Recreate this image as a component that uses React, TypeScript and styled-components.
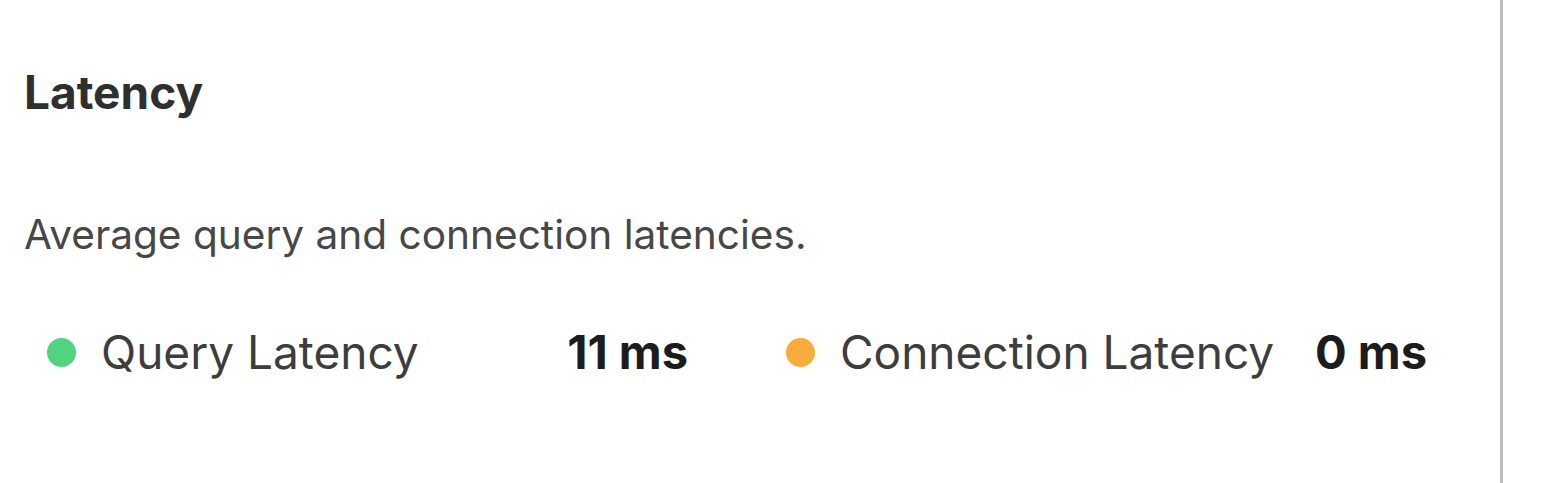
import styled, { createGlobalStyle } from 'styled-components'

const GlobalStyle = createGlobalStyle`
    html, body {
        margin: 0;
        padding: 0;
        background: #ffffff;
    }
    body {
        font-family: Inter, "Liberation Sans", sans-serif;
        -webkit-font-smoothing: antialiased;
    }
`

interface IDotProps {
    color: string
}

interface IMetric {
    label: string,
    value: string,
    color: string
}

const metrics: IMetric[] = [
    { label: 'Query Latency', value: '11 ms', color: '#52d382' },
    { label: 'Connection Latency', value: '0 ms', color: '#f9ab3d' },
]

export const Page = styled.div`
    width: 1549px;
    height: 483px;
    display: flex;
    overflow: hidden;
`

export const Card = styled.section`
    width: 1503px;
    height: 100%;
    border-right: 3px solid #bdbdbd;
    box-sizing: border-box;
    padding: 64px 0 0 24px;
    display: flex;
    flex-direction: column;
`

export const Title = styled.h2`
    margin: 0;
    font-size: 46px;
    font-weight: 700;
    line-height: 56px;
    color: #2f2f2f;
`

export const Description = styled.p`
    margin: 90px 0 0;
    font-size: 40.6px;
    font-weight: 400;
    line-height: 50px;
    color: #474747;
`

export const Legend = styled.div`
    margin-top: 64px;
    padding-left: 23px;
    display: flex;
    gap: 98px;
`

export const Item = styled.div`
    width: 641px;
    display: flex;
    align-items: center;
    justify-content: space-between;
`

export const LabelGroup = styled.div`
    display: flex;
    align-items: center;
    gap: 25px;
`

export const Dot = styled.span<IDotProps>`
    width: 29px;
    height: 29px;
    border-radius: 50%;
    background-color: ${props => props.color};
`

export const Label = styled.span`
    font-size: 46px;
    line-height: 56px;
    color: #3d3d3d;
`

export const Value = styled.span`
    font-size: 47px;
    font-weight: 700;
    line-height: 56px;
    color: #1c1c1c;
`

export default function App() {
    return (
        <>
            <GlobalStyle />
            <Page>
                <Card>
                    <Title>Latency</Title>
                    <Description>Average query and connection latencies.</Description>
                    <Legend>
                        {metrics.map(m => (
                            <Item key={m.label}>
                                <LabelGroup>
                                    <Dot color={m.color} />
                                    <Label>{m.label}</Label>
                                </LabelGroup>
                                <Value>{m.value}</Value>
                            </Item>
                        ))}
                    </Legend>
                </Card>
            </Page>
        </>
    )
}
